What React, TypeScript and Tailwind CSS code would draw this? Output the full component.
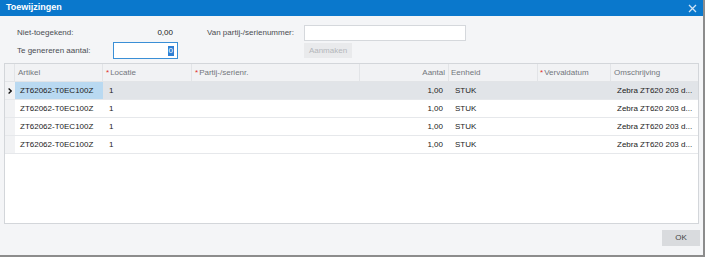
import React from 'react';

const rows = [1, 2, 3, 4];

function Req() {
  return <span className="mr-[1px] text-[#e0302b]">*</span>;
}

export default function App() {
  return (
    <div
      className="h-[257px] w-[707px] bg-white text-[8px] text-[#222]"
      style={{ fontFamily: '"Liberation Sans", Arial, sans-serif' }}
    >
      <div className="flex h-[257px] w-[705px] flex-col border-b-2 border-r-2 border-[#8c8c8c] bg-[#f4f5f7]">
        <div className="flex h-[16px] items-center justify-between bg-[#0a78cc] pl-[6px] pr-[6px]">
          <span className="text-[9px] font-bold text-white">Toewijzingen</span>
          <svg width="9" height="9" viewBox="0 0 9 9" className="text-[#cfe4f6]">
            <path d="M1 1 L8 8 M8 1 L1 8" stroke="currentColor" strokeWidth="1.3" />
          </svg>
        </div>

        <div className="flex h-[47px] flex-col pl-[17px] pt-[9px]">
          <div className="flex h-[16px] items-center">
            <span className="w-[96px] text-[#4a4d52]">Niet-toegekend:</span>
            <span className="w-[60px] text-right">0,00</span>
            <span className="ml-[34px] w-[97px] text-[#4a4d52]">Van partij-/serienummer:</span>
            <div className="h-[16px] w-[162px] border border-[#d5d8dc] bg-white" />
          </div>
          <div className="mt-[1px] flex h-[17px] items-center">
            <span className="w-[96px] text-[#4a4d52]">Te genereren aantal:</span>
            <div className="flex h-[17px] w-[65px] items-center justify-end border border-[#3a8fd6] bg-white pr-[3px]">
              <span className="bg-[#2f7fd4] px-[1px] leading-[10px] text-white">0</span>
            </div>
            <span className="w-[126px]" />
            <div className="flex h-[15px] w-[48px] items-center justify-center bg-[#e9eaec] text-[#b4b7bb]">
              Aanmaken
            </div>
          </div>
        </div>

        <div className="mx-[4px] flex h-[161px] w-[695px] flex-col border border-[#d3d6da] bg-white">
          <div className="flex h-[18px] border-b border-[#e2e4e7] bg-[#f1f2f4] text-[#72767c]">
            <div className="w-[10px] border-r border-[#e2e4e7]" />
            <div className="flex w-[88px] items-center border-r border-[#e2e4e7] pl-[3px]">Artikel</div>
            <div className="flex w-[89px] items-center border-r border-[#e2e4e7] pl-[3px]">
              <Req />Locatie
            </div>
            <div className="flex w-[168px] items-center border-r border-[#e2e4e7] pl-[3px]">
              <Req />Partij-/serienr.
            </div>
            <div className="flex w-[89px] items-center justify-end border-r border-[#e2e4e7] pr-[3px]">Aantal</div>
            <div className="flex w-[89px] items-center border-r border-[#e2e4e7] pl-[2px]">Eenheid</div>
            <div className="flex w-[73px] items-center border-r border-[#e2e4e7] pl-[2px]">
              <Req />Vervaldatum
            </div>
            <div className="flex w-[87px] items-center pl-[3px]">Omschrijving</div>
          </div>

          {rows.map((r) => {
            const selected = r === 1;
            return (
              <div
                key={r}
                className={`flex h-[18px] border-b border-[#e6e8eb] ${selected ? 'bg-[#e1e4e8]' : 'bg-white'}`}
              >
                <div className="flex w-[10px] items-center justify-center bg-[#f1f2f4]">
                  {selected && (
                    <svg width="4" height="6" viewBox="0 0 4 6">
                      <path d="M0.6 0.6 L3.2 3 L0.6 5.4" fill="none" stroke="#111" strokeWidth="1.3" />
                    </svg>
                  )}
                </div>
                <div className={`flex w-[88px] items-center pl-[5px] ${selected ? 'bg-[#b9d9f1]' : ''}`}>
                  ZT62062-T0EC100Z
                </div>
                <div className="flex w-[89px] items-center pl-[6px]">1</div>
                <div className="w-[168px]" />
                <div className="flex w-[89px] items-center justify-end pr-[6px]">1,00</div>
                <div className="flex w-[89px] items-center pl-[6px]">STUK</div>
                <div className="w-[73px]" />
                <div className="flex w-[87px] items-center whitespace-nowrap pl-[6px]">Zebra ZT620 203 d...</div>
              </div>
            );
          })}
        </div>

        <div className="flex justify-end pr-[3px] pt-[6px]">
          <div className="flex h-[16px] w-[38px] items-center justify-center bg-[#d9dbde] text-[#444]">OK</div>
        </div>
      </div>
    </div>
  );
}
